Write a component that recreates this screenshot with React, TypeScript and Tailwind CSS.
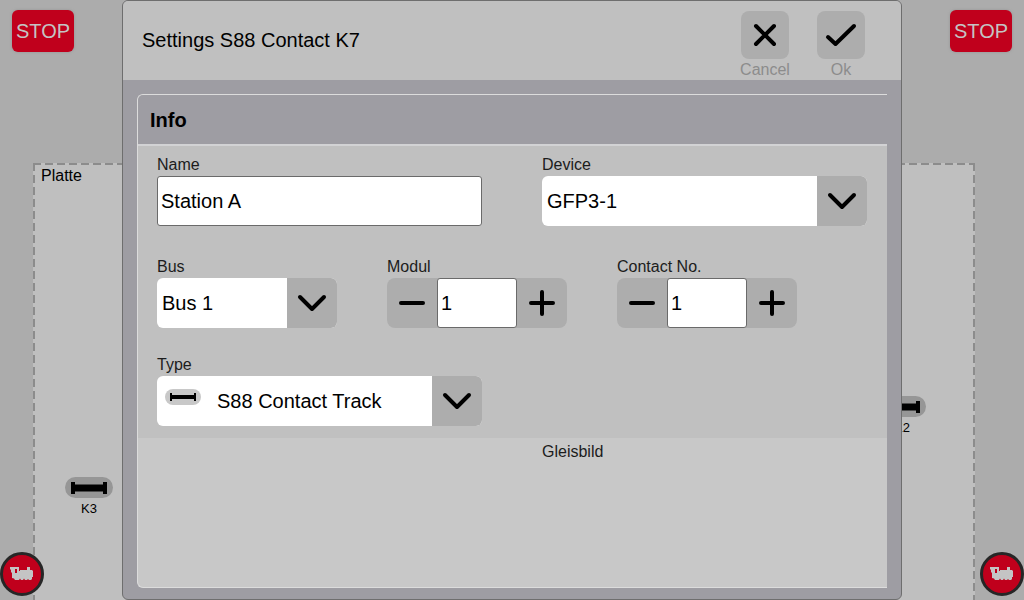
import { useState } from "react";
import type { ReactNode } from "react";

const fieldLabel = "block h-[22px] text-base leading-[21px] text-[#1c1c1c]";
const inputBox =
  "h-[50px] min-w-0 rounded-[3px] border border-[#6a6a6a] bg-white px-[3px] text-xl text-black outline-none";

function StopButton() {
  return (
    <button
      type="button"
      className="h-[42px] w-[62px] rounded-md bg-[#c0001c] text-xl text-[#c4c4c4] shadow-[0_0_2px_1px_#a0a0a0]"
    >
      STOP
    </button>
  );
}

function LocoButton({ label }: { label: string }) {
  return (
    <button
      type="button"
      aria-label={label}
      className="flex size-[44px] items-center justify-center rounded-full border-[3px] border-[#262626] bg-[#c0001c]"
    >
      <svg width="24" height="14" viewBox="0 0 24 14" fill="#c4c4c4" aria-hidden="true">
        <path
          fillRule="evenodd"
          d="M0 0H9V4H10V3H17V0H20V3H22L23 4V10H22V12L21 13H19L18 12L17 13H15L14 11.500L13 13H11L10 11.500L9 13H5L4 11.500L2 11V6L1 5V3L0 2ZM5 2V6H7V2Z"
        />
      </svg>
    </button>
  );
}

function TrackContact({ name }: { name: string }) {
  return (
    <div className="flex w-[48px] flex-col items-center">
      <svg width="48" height="22" viewBox="0 0 48 22" aria-hidden="true">
        <rect width="48" height="21" rx="10.5" fill="#969696" />
        <path d="M6 5H10V7.500H38V5H42V17H38V14.500H10V17H6Z" fill="#000" />
      </svg>
      <span className="text-[13px] leading-5 text-black">{name}</span>
    </div>
  );
}

function HeaderAction({ label, children }: { label: string; children: ReactNode }) {
  return (
    <button type="button" className="flex w-[76px] flex-col items-center text-base leading-[21px] text-[#8c8c8c]">
      <span className="flex size-[48px] items-center justify-center rounded-lg bg-[#adadad]">{children}</span>
      {label}
    </button>
  );
}

function SelectField({
  id,
  label,
  options,
  icon,
}: {
  id: string;
  label: string;
  options: string[];
  icon?: ReactNode;
}) {
  return (
    <div>
      <label htmlFor={id} className={fieldLabel}>
        {label}
      </label>
      <div className="relative">
        <select
          id={id}
          className={`h-[50px] w-full appearance-none rounded-md bg-white pr-[50px] text-xl text-black outline-none ${
            icon ? "pl-[60px]" : "pl-[5px]"
          }`}
        >
          {options.map((o) => (
            <option key={o}>{o}</option>
          ))}
        </select>
        {icon && <span className="pointer-events-none absolute top-[13px] left-2">{icon}</span>}
        <span className="pointer-events-none absolute inset-y-0 right-0 flex w-[50px] items-center justify-center rounded-r-md bg-[#adadad]">
          <svg width="30" height="18" viewBox="0 0 30 18" fill="none" stroke="#000" strokeWidth="4" strokeLinecap="round" strokeLinejoin="round" aria-hidden="true">
            <path d="M3 3L15 15L27 3" />
          </svg>
        </span>
      </div>
    </div>
  );
}

function StepIcon({ plus }: { plus?: boolean }) {
  return (
    <svg width="26" height="26" viewBox="0 0 26 26" stroke="#000" strokeWidth="4" strokeLinecap="round" aria-hidden="true">
      <path d={plus ? "M2 13H24M13 2V24" : "M2 13H24"} />
    </svg>
  );
}

function StepperField({ id, label }: { id: string; label: string }) {
  const [value, setValue] = useState(1);
  return (
    <div>
      <label htmlFor={id} className={fieldLabel}>
        {label}
      </label>
      <div className="flex rounded-lg bg-[#adadad]">
        <button
          type="button"
          aria-label={`Decrease ${label}`}
          onClick={() => setValue(Math.max(1, value - 1))}
          className="flex h-[50px] w-[50px] shrink-0 items-center justify-center"
        >
          <StepIcon />
        </button>
        <input
          id={id}
          inputMode="numeric"
          value={value}
          onChange={(e) => setValue(Number(e.target.value) || 1)}
          className={`${inputBox} w-full flex-1`}
        />
        <button
          type="button"
          aria-label={`Increase ${label}`}
          onClick={() => setValue(value + 1)}
          className="flex h-[50px] w-[50px] shrink-0 items-center justify-center"
        >
          <StepIcon plus />
        </button>
      </div>
    </div>
  );
}

export default function App() {
  return (
    <div className="relative flex h-screen flex-col overflow-hidden bg-[#acacac] font-['Liberation_Sans',Arial,sans-serif]">
      <header className="flex h-[163px] shrink-0 items-start justify-between px-3 pt-[10px]">
        <StopButton />
        <StopButton />
      </header>
      <main className="relative mr-[49px] ml-[33px] flex-1 bg-[#bfbfbf] bg-[repeating-linear-gradient(90deg,#8c8c8c_0_8px,transparent_8px_12px),repeating-linear-gradient(180deg,#8c8c8c_0_8px,transparent_8px_12px),repeating-linear-gradient(180deg,#8c8c8c_0_8px,transparent_8px_12px)] bg-[size:100%_2px,2px_100%,2px_100%] bg-[position:top_left,top_left,top_right] bg-no-repeat">
        <h1 className="px-2 pt-[2px] text-base leading-[22px] text-black">Platte</h1>
        <div className="absolute top-[314px] left-8">
          <TrackContact name="K3" />
        </div>
        <div className="absolute top-[233px] right-[49px]">
          <TrackContact name="K2" />
        </div>
      </main>
      <div className="absolute inset-x-0 bottom-[4px] flex justify-between">
        <LocoButton label="Left locomotive" />
        <LocoButton label="Right locomotive" />
      </div>

      <div className="absolute inset-0 flex justify-center">
        <form
          role="dialog"
          aria-labelledby="dialog-title"
          onSubmit={(e) => e.preventDefault()}
          className="flex w-full max-w-[780px] flex-col overflow-hidden rounded-md border border-[#6e6e6e] bg-[#9e9da3]"
        >
          <div className="flex h-[79px] shrink-0 items-start justify-between bg-[#c0c0c0] pr-[22px] pl-[19px]">
            <h2 id="dialog-title" className="text-xl leading-[79px] text-black">
              Settings S88 Contact K7
            </h2>
            <div className="flex pt-[10px]">
              <HeaderAction label="Cancel">
                <svg width="24" height="24" viewBox="0 0 24 24" stroke="#000" strokeWidth="4" strokeLinecap="round" aria-hidden="true">
                  <path d="M3 3L21 21M21 3L3 21" />
                </svg>
              </HeaderAction>
              <HeaderAction label="Ok">
                <svg width="32" height="24" viewBox="0 0 32 24" fill="none" stroke="#000" strokeWidth="4" strokeLinecap="round" strokeLinejoin="round" aria-hidden="true">
                  <path d="M3 14L10.500 21L29 3" />
                </svg>
              </HeaderAction>
            </div>
          </div>

          <section className="mx-[14px] mt-[14px] mb-[11px] flex flex-1 flex-col overflow-hidden rounded-l-md border-y border-l border-[#dcdcdc] bg-[#c8c8c8]">
            <h3 className="h-[51px] shrink-0 border-b-2 border-[#d2d2d4] bg-[#9e9da3] pl-3 text-xl leading-[51px] font-bold text-black">
              Info
            </h3>
            <div className="bg-[#c0c0c0] pt-2 pr-5 pb-3 pl-[19px]">
              <div className="grid grid-cols-2 gap-x-[60px]">
                <div>
                  <label htmlFor="name" className={fieldLabel}>
                    Name
                  </label>
                  <input id="name" defaultValue="Station A" className={`${inputBox} block w-full`} />
                </div>
                <SelectField id="device" label="Device" options={["GFP3-1"]} />
              </div>
              <div className="mt-[30px] grid grid-cols-[repeat(3,180px)] gap-x-[50px]">
                <SelectField id="bus" label="Bus" options={["Bus 1", "Bus 2", "Bus 3"]} />
                <StepperField id="modul" label="Modul" />
                <StepperField id="contact" label="Contact No." />
              </div>
              <div className="mt-[26px] grid grid-cols-2 gap-x-[60px]">
                <SelectField
                  id="type"
                  label="Type"
                  options={["S88 Contact Track"]}
                  icon={
                    <svg width="36" height="16" viewBox="0 0 36 16" aria-hidden="true">
                      <rect width="36" height="16" rx="8" fill="#c8c8c8" />
                      <path d="M5 4H7V6H29V4H31V12H29V10H7V12H5Z" fill="#000" />
                    </svg>
                  }
                />
              </div>
            </div>
            <div className="grid grid-cols-2 gap-x-[60px] pt-[3px] pr-5 pl-[19px]">
              <span className={`${fieldLabel} col-start-2`}>Gleisbild</span>
            </div>
          </section>
        </form>
      </div>
    </div>
  );
}
